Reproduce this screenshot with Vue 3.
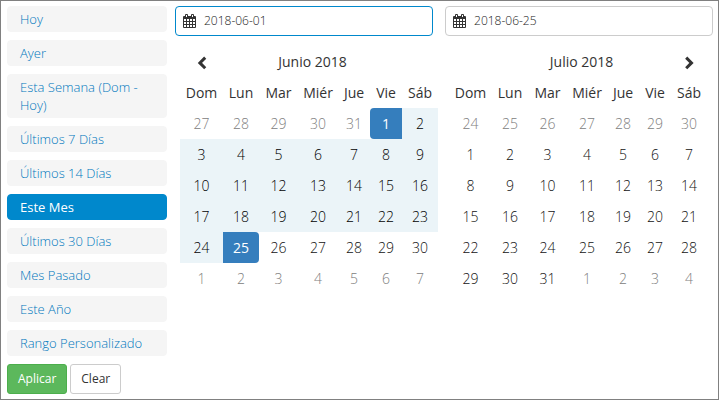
<script setup>
import { ref } from 'vue'

const ranges = [
  'Hoy',
  'Ayer',
  'Esta Semana (Dom - Hoy)',
  'Últimos 7 Días',
  'Últimos 14 Días',
  'Este Mes',
  'Últimos 30 Días',
  'Mes Pasado',
  'Este Año',
  'Rango Personalizado',
]
const activeRange = ref('Este Mes')
const weekdays = ['Dom', 'Lun', 'Mar', 'Miér', 'Jue', 'Vie', 'Sáb']

// Builds whole weeks of days from the trailing days of the previous month on.
function buildWeeks(firstShown, prevLast, monthLast, weekCount, rangeStart, rangeEnd) {
  const cells = []
  for (let d = firstShown; d <= prevLast; d++) cells.push({ day: d, kind: 'off' })
  for (let d = 1; d <= monthLast; d++) {
    let kind = 'plain'
    if (d === rangeStart) kind = 'edge start'
    else if (d === rangeEnd) kind = 'edge end'
    else if (d > rangeStart && d < rangeEnd) kind = 'in-range'
    cells.push({ day: d, kind })
  }
  for (let d = 1; cells.length < weekCount * 7; d++) cells.push({ day: d, kind: 'off' })
  return Array.from({ length: weekCount }, (_, i) => cells.slice(i * 7, i * 7 + 7))
}

const calendars = ref([
  { id: 'start', label: 'Fecha inicial', value: '2018-06-01', month: 'Junio 2018', prev: true, weeks: buildWeeks(27, 31, 30, 6, 1, 25) },
  { id: 'end', label: 'Fecha final', value: '2018-06-25', month: 'Julio 2018', next: true, weeks: buildWeeks(24, 30, 31, 6, 0, 0) },
])
</script>

<template>
  <main class="picker">
    <aside class="sidebar">
      <ul class="ranges">
        <li v-for="r in ranges" :key="r">
          <button type="button" class="range" :class="{ active: r === activeRange }" @click="activeRange = r">{{ r }}</button>
        </li>
      </ul>
      <div class="actions">
        <button type="button" class="btn apply">Aplicar</button>
        <button type="button" class="btn clear">Clear</button>
      </div>
    </aside>
    <div class="calendars">
      <section v-for="c in calendars" :key="c.id" class="calendar" :class="c.id">
        <div class="field">
          <label :for="c.id" :aria-label="c.label">
            <svg class="cal-icon" viewBox="0 0 13 14" aria-hidden="true">
              <path fill="#333" fill-rule="evenodd" d="M1 2h1V1q0-1 1-1h1q1 0 1 1v1h3V1q0-1 1-1h1q1 0 1 1v1h1q1 0 1 1v10q0 1-1 1H1q-1 0-1-1V3q0-1 1-1zM1 5v2h2V5zm3 0v2h2V5zm3 0v2h2V5zm3 0v2h2V5zM1 8v2h2V8zm3 0v2h2V8zm3 0v2h2V8zm3 0v2h2V8zM1 11v2h2v-2zm3 0v2h2v-2zm3 0v2h2v-2zm3 0v2h2v-2zM3 1v2h1V1zm6 0v2h1V1z" />
            </svg>
          </label>
          <input :id="c.id" v-model="c.value" type="text" />
        </div>
        <table>
          <colgroup>
            <col v-for="w in weekdays" :key="w" :class="'c-' + w.slice(0, 2).toLowerCase()" />
          </colgroup>
          <thead>
            <tr>
              <th>
                <button v-if="c.prev" type="button" class="nav" aria-label="Mes anterior">
                  <svg viewBox="0 0 10 14" aria-hidden="true"><path d="M8.2 1.6 2.9 6.9l5.3 5.3" /></svg>
                </button>
              </th>
              <th colspan="5">{{ c.month }}</th>
              <th>
                <button v-if="c.next" type="button" class="nav" aria-label="Mes siguiente">
                  <svg viewBox="0 0 10 14" aria-hidden="true"><path d="m2.2 1.6 5.3 5.3-5.3 5.3" /></svg>
                </button>
              </th>
            </tr>
            <tr>
              <th v-for="w in weekdays" :key="w">{{ w }}</th>
            </tr>
          </thead>
          <tbody>
            <tr v-for="(week, i) in c.weeks" :key="i">
              <td v-for="(d, j) in week" :key="j" :class="d.kind">{{ d.day }}</td>
            </tr>
          </tbody>
        </table>
      </section>
    </div>
  </main>
</template>

<style>
body {
  background: #fff;
}
</style>

<style scoped>
.picker,
.picker * {
  box-sizing: border-box;
}
.picker {
  display: flex;
  align-items: flex-start;
  gap: 8px;
  min-height: 100vh;
  padding: 5px 5px 5px 6px;
  border: 1px solid #808080;
  color: #333;
  font-family: "Open Sans", "Liberation Sans", sans-serif;
  font-size: 14px;
}
button,
input {
  font-family: inherit;
}
.sidebar {
  flex: 0 0 160px;
}
.ranges {
  display: grid;
  gap: 8px;
  margin: 0 0 8px;
  padding: 0;
  list-style: none;
}
.ranges li {
  display: grid;
}
.range {
  padding: 3px 12px;
  border: 1px solid #f5f5f5;
  border-radius: 4px;
  background: #f5f5f5;
  color: #0078bd;
  font-size: 13px;
  font-weight: 300;
  line-height: 18px;
  text-align: left;
}
.range.active {
  border-color: #08c;
  background: #08c;
  color: #fff;
  font-weight: 400;
}
.actions {
  display: flex;
  gap: 3px;
}
.btn {
  padding: 5px 10px;
  border: 1px solid #ccc;
  border-radius: 3px;
  background: #fff;
  color: #333;
  font-size: 12px;
  line-height: 18px;
}
.apply {
  border-color: #4cae4c;
  background: #5cb85c;
  color: #fff;
}
.calendars {
  flex: 1;
  display: grid;
  grid-template-columns: 263fr 268fr;
  gap: 7px;
}
.field {
  display: flex;
  align-items: center;
  gap: 8px;
  height: 30px;
  margin-bottom: 10px;
  padding: 0 7px;
  border: 1px solid #ccc;
  border-radius: 4px;
}
.start .field {
  margin-right: 5px;
  border-color: #08c;
}
.field label {
  display: flex;
}
.cal-icon {
  width: 13px;
  height: 14px;
}
.field input {
  flex: 1;
  min-width: 0;
  padding: 0;
  border: 0;
  outline: 0;
  background: transparent;
  color: #222;
  font-size: 12px;
  font-weight: 300;
  line-height: 18px;
}
.start table {
  margin-left: 5px;
  width: calc(100% - 5px);
}
.end table {
  margin-left: 4px;
  width: calc(100% - 10px);
}
table {
  table-layout: fixed;
  border-collapse: separate;
  border-spacing: 0;
}
.c-do { width: 43px; }
.c-lu, .c-sá { width: 36px; }
.c-ma { width: 39px; }
.c-mi { width: 40px; }
.c-ju, .c-vi { width: 32px; }
th,
td {
  height: 31px;
  padding: 0;
  font-weight: 400;
  line-height: 20px;
  text-align: center;
  vertical-align: middle;
  white-space: nowrap;
}
td {
  color: #111;
  font-weight: 300;
}
.off {
  color: #808080;
}
.in-range {
  background: #ebf4f8;
  color: #000;
}
.edge {
  background: #357ebd;
  color: #fff;
  font-weight: 400;
}
.edge.start {
  border-radius: 4px 0 0 4px;
}
.edge.end {
  border-radius: 0 4px 4px 0;
}
.nav {
  display: inline-flex;
  padding: 0;
  border: 0;
  background: none;
  vertical-align: middle;
}
.nav svg {
  width: 10px;
  height: 14px;
  fill: none;
  stroke: #333;
  stroke-width: 3;
}
</style>
